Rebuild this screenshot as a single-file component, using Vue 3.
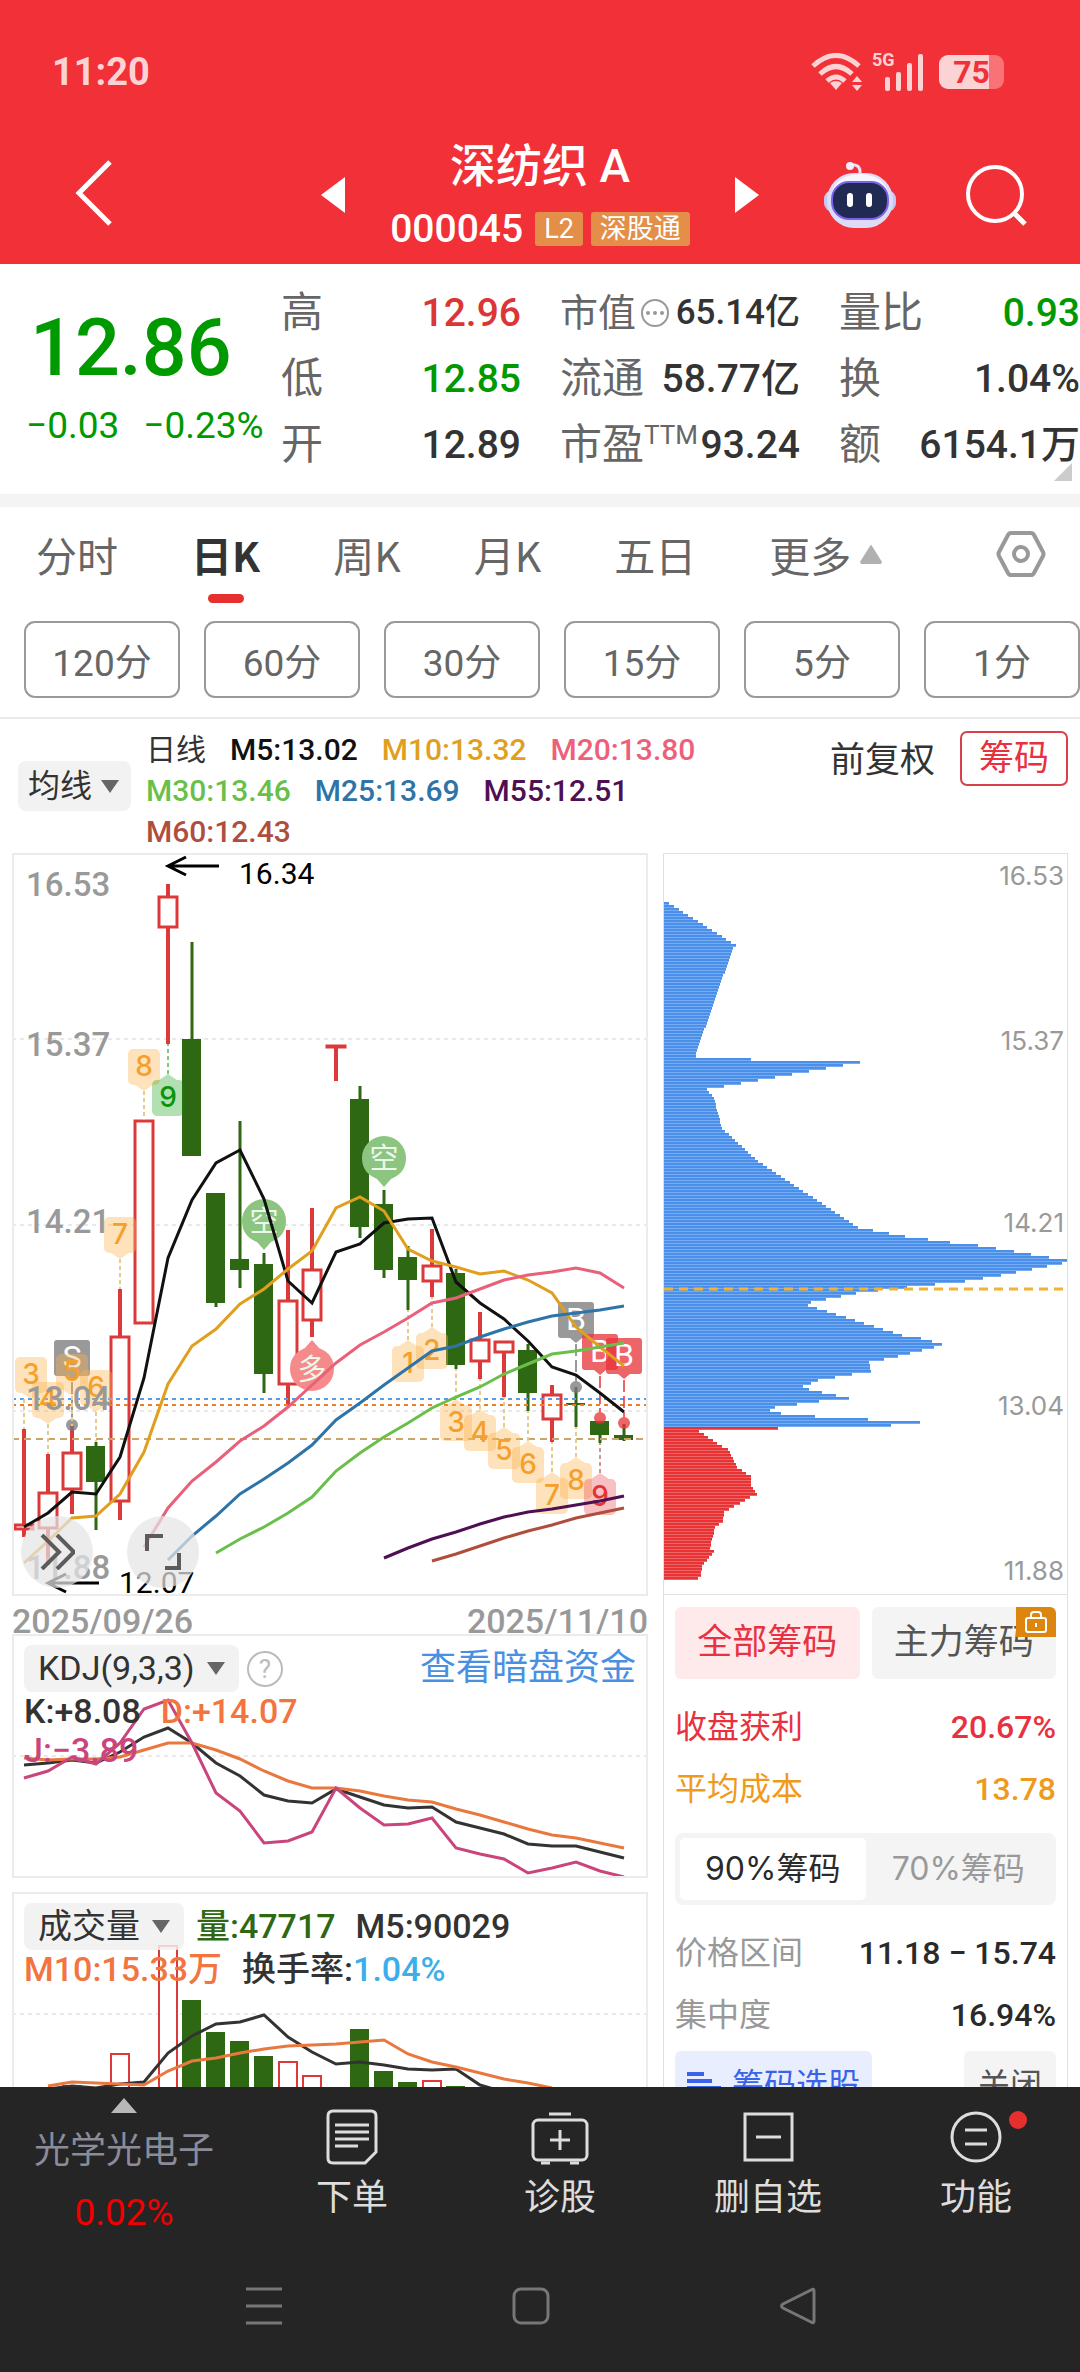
<script setup>
  import {ref} from "vue";

  const tabs = ["分时", "日K", "周K", "月K", "五日"];
  const activeTab = ref("日K");
  const periods = ["120分", "60分", "30分", "15分", "5分", "1分"];
  const average = ref("均线");
  const indicator = ref("KDJ(9,3,3)");
  const volume = ref("成交量");
  const chipRange = ref("90%筹码");

  const legend = [
    {text: "日线", color: "#333333"},
    {text: "M5:13.02", color: "#111111"},
    {text: "M10:13.32", color: "#e09f1f"},
    {text: "M20:13.80", color: "#ee6079"},
    {text: "M30:13.46", color: "#6abf4b"},
    {text: "M25:13.69", color: "#2f74a8"},
    {text: "M55:12.51", color: "#4f1053"},
    {text: "M60:12.43", color: "#b04e3e"}
  ];

  // [high, body top, body bottom, low, up]
  const candles = [
    [1429, 1524, 1530, 1537, 1], [1454, 1492, 1529, 1565, 1], [1426, 1452, 1490, 1514, 1],
    [1442, 1446, 1482, 1530, 0], [1289, 1336, 1502, 1520, 1], [1120, 1120, 1324, 1324, 1],
    [884, 896, 928, 1044, 1], [942, 1039, 1156, 1156, 0], [1193, 1193, 1303, 1307, 0],
    [1121, 1259, 1270, 1288, 0], [1253, 1264, 1374, 1393, 0], [1230, 1300, 1385, 1405, 1],
    [1208, 1269, 1321, 1337, 1], [1045, 1045, 1048, 1081, 1], [1086, 1099, 1227, 1238, 0],
    [1190, 1204, 1270, 1278, 0], [1246, 1257, 1280, 1310, 0], [1229, 1265, 1282, 1297, 1],
    [1269, 1273, 1365, 1369, 0], [1312, 1339, 1362, 1379, 1], [1341, 1341, 1353, 1397, 1],
    [1344, 1350, 1393, 1411, 0], [1385, 1394, 1420, 1442, 1], [1387, 1403, 1405, 1427, 0],
    [1421, 1421, 1435, 1443, 0], [1424, 1435, 1440, 1441, 0]
  ];

  const averages = [
    {start: 0, color: "#111111", ys: [1527, 1513, 1492, 1494, 1457, 1378, 1258, 1200, 1163, 1150, 1199, 1281, 1303, 1252, 1244, 1223, 1219, 1218, 1282, 1303, 1319, 1341, 1367, 1375, 1393, 1412]},
    {start: 0, color: "#e09f1f", ys: [1563, 1541, 1518, 1516, 1494, 1452, 1384, 1346, 1329, 1304, 1289, 1269, 1251, 1208, 1197, 1211, 1249, 1261, 1267, 1274, 1271, 1280, 1293, 1327, 1347, 1366]},
    {start: 5, color: "#e8607a", ys: [1547, 1508, 1481, 1462, 1441, 1426, 1407, 1385, 1363, 1345, 1332, 1318, 1303, 1298, 1289, 1280, 1275, 1272, 1268, 1273, 1288]},
    {start: 6, color: "#2f74a8", ys: [1560, 1536, 1516, 1494, 1479, 1463, 1445, 1420, 1403, 1385, 1368, 1351, 1346, 1337, 1329, 1322, 1316, 1313, 1310, 1306]},
    {start: 8, color: "#6abf4b", ys: [1553, 1539, 1527, 1513, 1497, 1471, 1453, 1437, 1423, 1408, 1397, 1387, 1374, 1364, 1354, 1351, 1347, 1343]},
    {start: 15, color: "#4f1053", ys: [1558, 1548, 1539, 1532, 1524, 1517, 1512, 1509, 1505, 1501, 1496]},
    {start: 17, color: "#b04e3e", ys: [1561, 1554, 1546, 1538, 1531, 1525, 1518, 1513, 1508]}
  ];

  const kdj = [
    {start: 0, color: "#333333", ys: [1765, 1763, 1760, 1763, 1752, 1737, 1728, 1743, 1763, 1776, 1795, 1801, 1803, 1789, 1797, 1805, 1808, 1807, 1822, 1828, 1834, 1844, 1846, 1846, 1852, 1858]},
    {start: 0, color: "#e9783f", ys: [1758, 1760, 1759, 1759, 1757, 1750, 1743, 1743, 1750, 1759, 1771, 1781, 1788, 1788, 1791, 1796, 1800, 1802, 1809, 1815, 1822, 1829, 1835, 1838, 1843, 1848]},
    {start: 0, color: "#c9457c", ys: [1778, 1771, 1757, 1764, 1743, 1709, 1700, 1743, 1793, 1811, 1843, 1841, 1832, 1788, 1808, 1825, 1824, 1818, 1848, 1854, 1859, 1873, 1868, 1862, 1871, 1877]}
  ];

  // [candle index, top, up]
  const volumes = [
    [2, 2085, 1], [4, 2053, 1], [6, 1945, 1], [7, 2000, 0], [8, 2032, 0], [9, 2041, 0], [10, 2056, 0],
    [11, 2061, 1], [12, 2075, 1], [14, 2029, 0], [15, 2071, 0], [16, 2082, 0], [17, 2080, 1], [18, 2086, 0]
  ];

  const volumeLines = [
    {start: 1, color: "#333333", ys: [2089, 2086, 2088, 2084, 2082, 2053, 2036, 2024, 2022, 2015, 2037, 2052, 2064, 2062, 2065, 2069, 2070, 2069, 2085, 2092]},
    {start: 1, color: "#e9783f", ys: [2086, 2082, 2083, 2084, 2085, 2071, 2061, 2058, 2053, 2049, 2046, 2045, 2044, 2042, 2040, 2054, 2062, 2067, 2073, 2079, 2083, 2088]}
  ];

  // numbered flags: box centre x, box top, pointer side, candle x and candle end
  const flags = [
    {n: 3, x: 31, y: 1357, up: false, cx: 24, end: 1429},
    {n: 4, x: 48, y: 1382, up: false, cx: 48, end: 1454},
    {n: 5, x: 72, y: 1354, up: false, cx: 72, end: 1426},
    {n: 6, x: 96, y: 1370, up: false, cx: 96, end: 1442},
    {n: 7, x: 120, y: 1217, up: false, cx: 120, end: 1289},
    {n: 8, x: 144, y: 1049, up: false, cx: 144, end: 1120},
    {n: 9, x: 168, y: 1080, up: true, cx: 168, end: 1044, kind: "green"},
    {n: 1, x: 408, y: 1346, up: true, cx: 408, end: 1310},
    {n: 2, x: 432, y: 1333, up: true, cx: 432, end: 1297},
    {n: 3, x: 456, y: 1405, up: true, cx: 456, end: 1369},
    {n: 4, x: 480, y: 1415, up: true, cx: 480, end: 1379},
    {n: 5, x: 504, y: 1433, up: true, cx: 504, end: 1397},
    {n: 6, x: 528, y: 1447, up: true, cx: 528, end: 1411},
    {n: 7, x: 552, y: 1478, up: true, cx: 552, end: 1442},
    {n: 8, x: 576, y: 1463, up: true, cx: 576, end: 1427},
    {n: 9, x: 600, y: 1479, up: true, cx: 600, end: 1443, kind: "red"}
  ];

  const trades = [
    {text: "S", x: 72, y: 1340, dot: 1425, color: "#777777"},
    {text: "B", x: 576, y: 1302, dot: 1387, color: "#777777"},
    {text: "B", x: 600, y: 1334, dot: 1418, color: "#e83238"},
    {text: "B", x: 624, y: 1338, dot: 1423, color: "#e83238"}
  ];

  const priceLabels = [["16.53", 896], ["15.37", 1056], ["14.21", 1233], ["13.04", 1410], ["11.88", 1579]];
  const chipLabels = [["16.53", 885], ["15.37", 1050], ["14.21", 1232], ["13.04", 1415], ["11.88", 1580]];

  // [row, width], rows in between are interpolated
  const chipKeys = [
    [0, 5], [14, 72], [15, 69], [50, 32], [51, 32], [52, 87], [53, 196], [54, 179], [61, 60], [62, 43], [65, 50],
    [75, 58], [86, 94], [97, 144], [108, 194], [109, 209], [111, 241], [113, 286], [114, 314], [119, 403], [120, 398],
    [124, 337], [126, 301], [127, 271], [128, 243], [129, 214], [130, 192], [133, 147], [134, 144], [144, 238],
    [145, 257], [147, 278], [148, 270], [151, 234], [153, 205], [156, 207], [157, 188], [159, 154], [161, 139],
    [162, 145], [165, 185], [166, 155], [168, 111], [169, 106], [170, 117], [171, 151], [173, 256], [174, 227],
    [175, 114], [176, 35], [181, 58], [182, 64], [188, 73], [190, 82], [191, 87], [194, 87], [197, 93], [198, 86],
    [203, 60], [206, 59], [208, 51], [215, 46], [216, 50], [221, 38], [224, 37], [225, 34]
  ];

  const chipBars = [];
  for (let i = 0; i < chipKeys.length - 1; i++)
  {
    const [row, width] = chipKeys[i];
    const [nextRow, nextWidth] = chipKeys[i + 1];
    for (let r = row; r < nextRow; r++)
      chipBars.push({row: r, width: Math.round(width + (nextWidth - width) * (r - row) / (nextRow - row))});
  }
  chipBars.push({row: 225, width: 34});

  function candleX(i)
  {
    return 24 + i * 24;
  }

  function points(line)
  {
    return line.ys.map((y, i) => candleX(line.start + i) + "," + y).join(" ");
  }

  function pointer(flag)
  {
    const base = flag.up ? flag.y : flag.y + 36;
    const tip = flag.up ? base - 6 : base + 6;
    return (flag.x - 9) + "," + base + " " + flag.x + "," + tip + " " + (flag.x + 9) + "," + base;
  }
</script>

<template>
  <main class="page">
    <header class="top">
      <div class="status">
        <span class="clock">11:20</span>
        <div class="signals">
          <svg width="52" height="38" viewBox="0 0 52 38" fill="none" stroke="#fcd3d5" stroke-width="5">
            <path d="M2 13 Q25 -8 48 13" />
            <path d="M9 21 Q25 6 41 21" />
            <path d="M16 28 Q25 20 34 28" />
            <path d="M25 37 L19 30 Q25 26 31 30 Z" fill="#fcd3d5" stroke="none" />
            <path d="M41 29 L46 23 L51 29 Z M41 32 L46 38 L51 32 Z" fill="#fcd3d5" stroke="none" />
          </svg>
          <div class="cell">
            <span class="net">5G</span>
            <svg width="40" height="38" viewBox="0 0 40 38" fill="#fcd3d5">
              <rect x="0" y="24" width="5" height="14" rx="2" />
              <rect x="11" y="19" width="5" height="19" rx="2" />
              <rect x="22" y="10" width="5" height="28" rx="2" />
              <rect x="33" y="1" width="5" height="37" rx="2" />
            </svg>
          </div>
          <div class="battery">75</div>
        </div>
      </div>
      <nav class="bar">
        <div class="bar-left">
          <button aria-label="返回">
            <svg width="38" height="66" viewBox="0 0 38 66" fill="none" stroke="#fff" stroke-width="5">
              <path d="M35 2 L4 33 L35 64" />
            </svg>
          </button>
        </div>
        <div class="switcher">
          <button aria-label="上一只">
            <svg width="24" height="36" viewBox="0 0 24 36"><path d="M24 0 V36 L0 18 Z" fill="#fff" /></svg>
          </button>
          <div class="stock">
            <h1>深纺织 A</h1>
            <p><span class="code">000045</span><span class="tag">L2</span><span class="tag">深股通</span></p>
          </div>
          <button aria-label="下一只">
            <svg width="24" height="36" viewBox="0 0 24 36"><path d="M0 0 V36 L24 18 Z" fill="#fff" /></svg>
          </button>
        </div>
        <div class="bar-right">
          <button aria-label="助手">
            <svg width="74" height="68" viewBox="0 0 74 68">
              <path d="M26 4 Q38 2 37 13" fill="none" stroke="#e4e2f8" stroke-width="3" />
              <circle cx="27" cy="5" r="4" fill="#f0effc" />
              <rect x="1" y="29" width="72" height="22" rx="9" fill="#c5c8f4" />
              <rect x="4" y="12" width="66" height="55" rx="27" fill="#dcdcf7" />
              <path d="M8 34 Q12 14 37 13 Q62 14 66 34 Q54 20 37 20 Q20 20 8 34 Z" fill="#f7f6fd" />
              <rect x="9" y="21" width="56" height="37" rx="17" fill="#212a52" stroke="#7a62ea" stroke-width="2" />
              <rect x="24" y="32" width="6" height="14" rx="3" fill="#fff" />
              <rect x="43" y="32" width="6" height="14" rx="3" fill="#fff" />
            </svg>
          </button>
          <button aria-label="搜索">
            <svg width="62" height="62" viewBox="0 0 62 62" fill="none" stroke="#fff" stroke-width="4">
              <circle cx="30" cy="30" r="27" />
              <path d="M49 49 L60 60" stroke-width="5" />
            </svg>
          </button>
        </div>
      </nav>
    </header>

    <div class="content">
      <section class="quote">
        <div class="price">
          <strong>12.86</strong>
          <p><span>−0.03</span><span>−0.23%</span></p>
        </div>
        <dl>
          <div><dt>高</dt><dd class="red">12.96</dd></div>
          <div><dt>低</dt><dd class="green">12.85</dd></div>
          <div><dt>开</dt><dd>12.89</dd></div>
        </dl>
        <dl>
          <div class="small">
            <dt>市值
              <svg width="30" height="30" viewBox="0 0 30 30" fill="#999">
                <circle cx="15" cy="15" r="13" fill="none" stroke="#999" stroke-width="2" />
                <circle cx="8" cy="15" r="2" /><circle cx="15" cy="15" r="2" /><circle cx="22" cy="15" r="2" />
              </svg>
            </dt>
            <dd>65.14<i>亿</i></dd>
          </div>
          <div><dt>流通</dt><dd>58.77<i>亿</i></dd></div>
          <div><dt>市盈<sup>TTM</sup></dt><dd>93.24</dd></div>
        </dl>
        <dl>
          <div><dt>量比</dt><dd class="green">0.93</dd></div>
          <div><dt>换</dt><dd>1.04%</dd></div>
          <div><dt>额</dt><dd>6154.1<i>万</i></dd></div>
        </dl>
        <span class="corner"></span>
      </section>

      <nav class="tabs">
        <button v-for="tab in tabs" :key="tab" :class="{active: tab === activeTab}" @click="activeTab = tab">{{ tab }}</button>
        <button class="more">更多
          <svg width="24" height="20" viewBox="0 0 24 20"><path d="M11 2 Q12 0 13 2 L23 18 Q23 20 21 20 H3 Q1 20 1 18 Z" fill="#b0b0b0" /></svg>
        </button>
        <button class="settings" aria-label="设置">
          <svg width="50" height="48" viewBox="0 0 50 48" fill="none" stroke="#999" stroke-width="4">
            <path d="M15 3 H35 Q37 3 38 5 L47 22 Q48 24 47 26 L38 43 Q37 45 35 45 H15 Q13 45 12 43 L3 26 Q2 24 3 22 L12 5 Q13 3 15 3 Z" />
            <circle cx="25" cy="24" r="7" />
          </svg>
        </button>
      </nav>

      <div class="periods">
        <button v-for="period in periods" :key="period">{{ period }}</button>
      </div>

      <section class="averages">
        <label class="pick"><select v-model="average" aria-label="均线"><option>均线</option></select></label>
        <p class="legend"><span v-for="item in legend" :key="item.text" :style="{color: item.color}">{{ item.text }}</span></p>
        <button class="adjust">前复权</button>
        <button class="chips">筹码</button>
      </section>

      <div class="charts">
        <div class="left">
          <div class="panel">
            <svg class="plot" viewBox="14 855 632 739">
              <g stroke="#e9e9e9" stroke-width="2" stroke-dasharray="4 4">
                <path d="M12 1039 H648" /><path d="M12 1225 H648" /><path d="M12 1411 H648" />
              </g>
              <g v-for="(c, i) in candles" :key="i" :stroke="c[4] ? '#dc3a3a' : '#2f6813'">
                <path :d="`M${candleX(i)} ${c[0]} V${c[1]} M${candleX(i)} ${c[2]} V${c[3]}`" :stroke-width="c[4] ? 4 : 3" />
                <rect v-if="c[4]" :x="candleX(i) - 9" :y="c[1] + 1" width="18" :height="c[2] - c[1] - 2" fill="#fff" stroke-width="3" />
                <rect v-else :x="candleX(i) - 10" :y="c[1]" width="19" :height="c[2] - c[1]" fill="#2f6813" stroke="none" />
              </g>
              <path d="M12 1439 H648" stroke="#c9a56e" stroke-width="2" stroke-dasharray="7 5" />
              <path d="M12 1399 H648" stroke="#5b9be3" stroke-width="2" stroke-dasharray="4 4" />
              <path d="M12 1405 H648" stroke="#ee7d1d" stroke-width="2" stroke-dasharray="4 4" />
              <g v-for="t in trades" :key="t.x">
                <g opacity="0.75">
                  <path :d="`M${t.x} ${t.y + 42} V${t.dot}`" :stroke="t.color" stroke-width="2" stroke-dasharray="12 4" />
                  <circle :cx="t.x" :cy="t.dot" r="6" :fill="t.color" />
                  <path :d="`M${t.x - 18} ${t.y + 3} q0 -3 3 -3 h30 q3 0 3 3 v30 q0 3 -3 3 h-9 l-6 5 l-6 -5 h-9 q-3 0 -3 -3 Z`" :fill="t.color" />
                </g>
                <text class="trade" :x="t.x" :y="t.y + 28">{{ t.text }}</text>
              </g>
              <g v-for="f in flags" :key="f.x" class="flag" :class="f.kind">
                <path :d="`M${f.cx} ${f.up ? f.y - 6 : f.y + 42} V${f.end}`" stroke-width="2" stroke-dasharray="4 3" />
                <rect :x="f.x - 16" :y="f.y" width="32" height="36" rx="5" />
                <polygon :points="pointer(f)" />
                <text :x="f.x" :y="f.y + 27">{{ f.n }}</text>
              </g>
              <g class="pin">
                <path d="M242 1221 a22 22 0 1 1 44 0 q0 15 -15 21 l-7 8 l-7 -8 q-15 -6 -15 -21 Z" fill="#8bc57f" />
                <text x="264" y="1232">空</text>
                <path d="M362 1158 a22 22 0 1 1 44 0 q0 15 -15 21 l-7 8 l-7 -8 q-15 -6 -15 -21 Z" fill="#8bc57f" />
                <text x="384" y="1169">空</text>
                <path d="M290 1369 a22 22 0 1 0 44 0 q0 -15 -15 -21 l-7 -8 l-7 8 q-15 6 -15 21 Z" fill="#f58a8a" />
                <text x="312" y="1380">多</text>
              </g>
              <polyline v-for="line in averages" :key="line.color" :points="points(line)" fill="none" :stroke="line.color" stroke-width="3" />
              <text v-for="label in priceLabels" :key="label[0]" class="axis" x="26" :y="label[1]">{{ label[0] }}</text>
              <g fill="none" stroke="#000" stroke-width="3">
                <path d="M219 866 H168 M186 857 L168 866 L186 875" />
                <path d="M99 1583 H48 M66 1574 L48 1583 L66 1592" />
              </g>
              <text class="peak" x="239" y="884">16.34</text>
              <text class="peak" x="119" y="1593">12.07</text>
            </svg>
            <div class="tools">
              <button aria-label="展开">
                <svg width="36" height="36" viewBox="0 0 36 36"><path d="M3 1 L20 18 L3 35 M18 1 L35 18 L18 35" /></svg>
              </button>
              <button aria-label="全屏">
                <svg width="36" height="36" viewBox="0 0 36 36"><path d="M2 17 V2 H18 M20 34 H34 V19" /></svg>
              </button>
            </div>
          </div>
          <div class="dates"><span>2025/09/26</span><span>2025/11/10</span></div>

          <div class="panel">
            <svg class="plot" viewBox="14 1636 632 240">
              <path d="M12 1756 H648" stroke="#e9e9e9" stroke-width="2" stroke-dasharray="4 4" />
              <polyline v-for="line in kdj" :key="line.color" :points="points(line)" fill="none" :stroke="line.color" stroke-width="3" />
            </svg>
            <div class="overlay">
              <div class="row">
                <label class="pick"><select v-model="indicator" aria-label="指标"><option>KDJ(9,3,3)</option></select></label>
                <button class="help" aria-label="说明">?</button>
                <a class="dark" href="#">查看暗盘资金</a>
              </div>
              <p><span>K:+8.08</span><span class="orange">D:+14.07</span></p>
              <p><span class="purple">J:−3.89</span></p>
            </div>
          </div>

          <div class="panel">
            <svg class="plot" viewBox="14 1894 632 240">
              <path d="M12 2014 H648" stroke="#e9e9e9" stroke-width="2" stroke-dasharray="4 4" />
              <g v-for="v in volumes" :key="v[0]">
                <rect v-if="v[2]" :x="candleX(v[0]) - 9" :y="v[1] + 1" width="18" :height="2140 - v[1]" fill="#fff" stroke="#dc3a3a" stroke-width="2" />
                <rect v-else :x="candleX(v[0]) - 10" :y="v[1]" width="19" :height="2140 - v[1]" fill="#2f6813" />
              </g>
              <polyline v-for="line in volumeLines" :key="line.color" :points="points(line)" fill="none" :stroke="line.color" stroke-width="3" />
            </svg>
            <div class="overlay">
              <div class="row">
                <label class="pick"><select v-model="volume" aria-label="副图"><option>成交量</option></select></label>
                <p><span class="leaf">量:47717</span><span>M5:90029</span></p>
              </div>
              <p><span class="orange">M10:15.33万</span><span>换手率:<b>1.04%</b></span></p>
            </div>
          </div>
        </div>

        <aside class="right">
          <svg class="plot" viewBox="664 854 403 740">
            <g v-for="bar in chipBars" :key="bar.row" :fill="bar.row < 175 ? '#4a90eb' : '#e83234'">
              <rect x="664" :y="902 + bar.row * 3" :width="bar.width" height="3" />
              <rect x="664" :y="904 + bar.row * 3" :width="bar.width" height="1" fill="#fff" opacity="0.25" />
            </g>
            <path d="M664 1289 H1064" stroke="#f2b233" stroke-width="3" stroke-dasharray="9 6" />
            <text v-for="label in chipLabels" :key="label[0]" class="chip-axis" x="1064" :y="label[1]">{{ label[0] }}</text>
          </svg>
          <div class="chip-info">
            <div class="kinds">
              <button class="on">全部筹码</button>
              <button>主力筹码
                <span class="lock">
                  <svg width="24" height="24" viewBox="0 0 24 24" fill="none" stroke="#fff" stroke-width="2">
                    <rect x="2" y="8" width="20" height="14" rx="2" />
                    <path d="M7 8 V5 Q7 2 10 2 H14 Q17 2 17 5 V8 M12 13 V17" />
                  </svg>
                </span>
              </button>
            </div>
            <p class="crimson"><span>收盘获利</span><b>20.67%</b></p>
            <p class="amber"><span>平均成本</span><b>13.78</b></p>
            <div class="segment">
              <button v-for="name in ['90%筹码', '70%筹码']" :key="name" :class="{on: name === chipRange}" @click="chipRange = name">{{ name }}</button>
            </div>
            <p><span>价格区间</span><b>11.18 − 15.74</b></p>
            <p><span>集中度</span><b>16.94%</b></p>
            <div class="actions">
              <button class="pick-stock">
                <svg width="34" height="26" viewBox="0 0 34 26" fill="#3a63ea">
                  <rect y="0" width="17" height="4" /><rect y="7" width="25" height="4" /><rect y="14" width="34" height="4" /><rect y="21" width="34" height="4" />
                </svg>
                筹码选股
              </button>
              <button>关闭</button>
            </div>
          </div>
        </aside>
      </div>
    </div>

    <footer class="bottom">
      <nav class="menu">
        <button class="sector">
          <svg width="26" height="15" viewBox="0 0 26 15"><path d="M13 0 L26 15 H0 Z" fill="#b8b8b8" /></svg>
          <span>光学光电子</span>
          <em>0.02%</em>
        </button>
        <button>
          <svg width="60" height="56" viewBox="0 0 60 56" fill="none" stroke="#ddd" stroke-width="3">
            <path d="M11 2 H49 Q54 2 54 7 V43 L43 54 H11 Q6 54 6 49 V7 Q6 2 11 2 Z" />
            <path d="M13 16 H47 M13 23 H47 M13 30 H47 M13 37 H36" />
          </svg>
          <span>下单</span>
        </button>
        <button>
          <svg width="60" height="56" viewBox="0 0 60 56" fill="none" stroke="#ddd" stroke-width="3">
            <rect x="3" y="11" width="54" height="40" rx="5" />
            <path d="M19 5 H41 M30 21 V41 M20 31 H40 M11 54 H20 M40 54 H49" />
          </svg>
          <span>诊股</span>
        </button>
        <button>
          <svg width="60" height="56" viewBox="0 0 60 56" fill="none" stroke="#ddd" stroke-width="3">
            <rect x="7" y="5" width="47" height="46" />
            <path d="M18 28 H43" />
          </svg>
          <span>删自选</span>
        </button>
        <button>
          <svg width="60" height="56" viewBox="0 0 60 56" fill="none" stroke="#ddd" stroke-width="3">
            <circle cx="30" cy="28" r="24" />
            <path d="M19 21 H41 M19 35 H41" />
          </svg>
          <span>功能</span>
          <i class="dot"></i>
        </button>
      </nav>
      <nav class="system">
        <button aria-label="菜单">
          <svg width="38" height="38" viewBox="0 0 38 38"><path d="M1 2 H37 M1 19 H37 M1 36 H37" /></svg>
        </button>
        <button aria-label="主页">
          <svg width="38" height="38" viewBox="0 0 38 38"><rect x="2" y="2" width="34" height="34" rx="7" /></svg>
        </button>
        <button aria-label="后退">
          <svg width="38" height="38" viewBox="0 0 38 38"><path d="M35 4 V34 Q35 37 32 35 L4 21 Q1 19 4 17 L32 3 Q35 1 35 4 Z" /></svg>
        </button>
      </nav>
    </footer>
  </main>
</template>

<style>
  body
  {
    margin: 0;
  }
</style>

<style scoped>
  .page
  {
    height: 100vh;
    display: flex;
    flex-direction: column;
    overflow: hidden;
    background-color: white;
    color: #333;
    font-family: Roboto, "Noto Sans CJK SC", sans-serif;
  }

  button
  {
    padding: 0;
    border: 0;
    background: none;
    font: inherit;
    color: inherit;
    cursor: pointer;
  }

  svg
  {
    display: block;
    flex-shrink: 0;
  }

  h1, p, dl, dd
  {
    margin: 0;
  }

  /* header */
  .top
  {
    flex-shrink: 0;
    height: 264px;
    background-color: #f23037;
    color: white;
  }

  .status
  {
    height: 116px;
    padding: 14px 76px 0 52px;
    display: flex;
    justify-content: space-between;
    align-items: center;
    color: #fcd3d5;
    font-weight: bold;
  }

  .clock
  {
    font-size: 38px;
  }

  .signals
  {
    display: flex;
    align-items: center;
    gap: 14px;
  }

  .cell
  {
    position: relative;
    padding-left: 8px;
  }

  .net
  {
    position: absolute;
    left: -5px;
    top: -3px;
    font-size: 18px;
    line-height: 20px;
  }

  .battery
  {
    width: 65px;
    height: 34px;
    border-radius: 9px;
    background: linear-gradient(to right, #fcd3d5 50px, #f87276 50px);
    color: #f23037;
    font-size: 32px;
    line-height: 35px;
    text-align: center;
  }

  .bar
  {
    height: 124px;
    display: grid;
    grid-template-columns: 1fr auto 1fr;
    align-items: center;
  }

  .bar-left
  {
    padding-left: 75px;
  }

  .bar-right
  {
    display: flex;
    justify-content: flex-end;
    align-items: center;
    gap: 68px;
    padding-right: 53px;
  }

  .switcher
  {
    display: flex;
    align-items: center;
  }

  .stock
  {
    width: 390px;
    padding-top: 4px;
    text-align: center;
  }

  .stock h1
  {
    font-size: 46px;
    line-height: 64px;
    font-weight: 500;
  }

  .stock p
  {
    display: flex;
    justify-content: center;
    align-items: center;
    gap: 8px;
    height: 62px;
  }

  .code
  {
    margin-right: 4px;
    font-size: 39px;
    font-weight: 500;
  }

  .tag
  {
    padding: 0 9px;
    border-radius: 3px;
    background-color: #e38e49;
    font-size: 27px;
    line-height: 34px;
  }

  .content
  {
    flex: 1;
    min-height: 0;
    overflow: hidden;
  }

  /* quote */
  .quote
  {
    position: relative;
    display: grid;
    grid-template-columns: minmax(0, 281fr) minmax(0, 279fr) minmax(0, 279fr) minmax(0, 241fr);
    padding: 16px 0;
    border-bottom: 13px solid #f4f4f4;
  }

  .price
  {
    padding-left: 26px;
    color: #090;
  }

  .price strong
  {
    display: block;
    padding-top: 20px;
    font-size: 79px;
    font-weight: 500;
    line-height: 96px;
    text-indent: 4px;
  }

  .price p
  {
    display: flex;
    gap: 24px;
    font-size: 37px;
    line-height: 60px;
    white-space: nowrap;
  }

  dl
  {
    padding-right: 39px;
  }

  dl:last-of-type
  {
    padding-right: 0;
  }

  dl div
  {
    display: flex;
    justify-content: space-between;
    align-items: center;
    height: 66px;
    font-size: 39px;
    font-weight: 500;
    line-height: 60px;
    white-space: nowrap;
  }

  dl .small
  {
    font-size: 35px;
  }

  dt
  {
    display: flex;
    align-items: center;
    color: #666;
    font-size: 42px;
    font-weight: normal;
  }

  .small dt
  {
    font-size: 38px;
    gap: 4px;
  }

  dt sup
  {
    align-self: flex-start;
    font-size: 26px;
    line-height: 40px;
  }

  dd i
  {
    font-style: normal;
  }

  .red
  {
    color: #dc3535;
  }

  .green
  {
    color: #090;
  }

  .corner
  {
    position: absolute;
    right: 8px;
    bottom: 13px;
    border: 9px solid transparent;
    border-right-color: #ccc;
    border-bottom-color: #ccc;
  }

  /* tabs */
  .tabs
  {
    display: flex;
    gap: 73px;
    height: 100px;
    padding: 0 34px 0 36px;
    color: #666;
    font-size: 41px;
    line-height: 94px;
    font-family: "Noto Sans CJK SC", sans-serif;
  }

  .tabs button
  {
    height: 94px;
  }

  .tabs .active
  {
    position: relative;
    color: #333;
    font-weight: bold;
  }

  .tabs .active::after
  {
    content: "";
    position: absolute;
    left: 50%;
    bottom: -2px;
    width: 36px;
    height: 9px;
    margin-left: -18px;
    border-radius: 5px;
    background-color: #e63030;
  }

  .tabs .more, .tabs .settings
  {
    display: flex;
    align-items: center;
    gap: 8px;
  }

  .settings
  {
    margin-left: auto;
  }

  .periods
  {
    display: flex;
    gap: 24px;
    padding: 14px 0 19px 24px;
    border-bottom: 2px solid #e9e9e9;
  }

  .periods button
  {
    flex: 1;
    height: 77px;
    border: 2px solid #999;
    border-radius: 11px;
    color: #666;
    font-size: 37px;
  }

  /* moving averages */
  .averages
  {
    display: flex;
    align-items: center;
    height: 134px;
    padding: 0 12px 0 18px;
  }

  .pick
  {
    display: flex;
    align-items: center;
    gap: 8px;
    padding: 0 12px;
    border-radius: 8px;
    background-color: rgba(240, 240, 240, 0.85);
  }

  .pick::after
  {
    content: "";
    border: 9px solid transparent;
    border-top: 13px solid #666;
    border-bottom: 0;
  }

  .pick select
  {
    appearance: none;
    border: 0;
    padding: 0;
    background: none;
    color: #333;
    font: inherit;
    font-size: 34px;
    line-height: 47px;
  }

  .averages .pick select
  {
    font-size: 32px;
    line-height: 50px;
  }

  .averages .pick
  {
    padding: 0 12px 0 10px;
  }

  .legend
  {
    flex: 1;
    display: flex;
    flex-wrap: wrap;
    column-gap: 24px;
    padding: 8px 90px 0 15px;
    font-size: 30px;
    font-weight: 500;
    line-height: 41px;
  }

  .legend span:first-child
  {
    font-weight: normal;
  }

  .adjust, .chips
  {
    align-self: flex-start;
    margin-top: 12px;
    font-size: 35px;
    line-height: 51px;
  }

  .adjust
  {
    padding-top: 4px;
    margin-right: 25px;
  }

  .chips
  {
    padding: 0 17px;
    border: 2px solid #d8404a;
    border-radius: 7px;
    color: #e8313f;
  }

  /* charts */
  .charts
  {
    display: grid;
    grid-template-columns: 636fr 405fr;
    gap: 15px;
    padding: 0 12px;
  }

  .panel
  {
    position: relative;
    border: 2px solid #ebebeb;
  }

  .plot
  {
    width: 100%;
    height: auto;
  }

  .panel + .panel
  {
    margin-top: 14px;
  }

  .axis
  {
    fill: #999;
    font-size: 33px;
    font-weight: 500;
  }

  .peak
  {
    font-size: 30px;
  }

  .trade
  {
    fill: white;
    font-size: 32px;
    text-anchor: middle;
  }

  .flag text
  {
    fill: #f5a02a;
    font-family: Inter, Roboto, sans-serif;
    font-size: 28px;
    font-weight: 500;
    text-anchor: middle;
  }

  .flag path
  {
    stroke: #e3cc8d;
  }

  .flag rect, .flag polygon
  {
    fill: rgba(252, 178, 75, 0.38);
  }

  .flag.green text
  {
    fill: #0a950a;
  }

  .flag.green path
  {
    stroke: #7fc97f;
  }

  .flag.green rect, .flag.green polygon
  {
    fill: rgba(0, 153, 0, 0.3);
  }

  .flag.red text
  {
    fill: #e03434;
  }

  .flag.red path
  {
    stroke: #cf9797;
  }

  .flag.red rect, .flag.red polygon
  {
    fill: rgba(230, 50, 60, 0.3);
  }

  .pin text
  {
    fill: #eef7ec;
    font-size: 29px;
    text-anchor: middle;
  }

  .tools
  {
    position: absolute;
    left: 7px;
    bottom: 6px;
    display: flex;
    gap: 34px;
  }

  .tools button
  {
    width: 72px;
    height: 72px;
    display: flex;
    justify-content: center;
    align-items: center;
    border-radius: 50%;
    background-color: rgba(228, 228, 228, 0.72);
  }

  .tools path
  {
    fill: none;
    stroke: #5c5c5c;
    stroke-width: 4;
  }

  .dates
  {
    display: flex;
    justify-content: space-between;
    height: 38px;
    color: #999;
    font-size: 34px;
    font-weight: 500;
    line-height: 50px;
  }

  .overlay
  {
    position: absolute;
    left: 10px;
    right: 10px;
    top: 9px;
    font-size: 34px;
    font-weight: 500;
  }

  .overlay p
  {
    display: flex;
    gap: 20px;
    line-height: 39px;
  }

  .row
  {
    display: flex;
    align-items: center;
    gap: 8px;
  }

  .row p
  {
    padding-left: 4px;
  }

  .row .pick
  {
    padding: 0 14px;
    gap: 12px;
    font-weight: normal;
  }

  .help
  {
    width: 36px;
    height: 36px;
    border: 2px solid #bbb;
    border-radius: 50%;
    color: #bbb;
    font-size: 26px;
    font-weight: normal;
    line-height: 32px;
  }

  .dark
  {
    margin-left: auto;
    color: #4a90e2;
    font-size: 36px;
    font-weight: normal;
    line-height: 47px;
    text-decoration: none;
  }

  .orange
  {
    color: #f2753f;
  }

  .purple
  {
    color: #c9457c;
  }

  .leaf
  {
    color: #2f6813;
  }

  .overlay b
  {
    color: #3daee9;
    font-weight: 500;
  }

  /* chip distribution */
  .right
  {
    border: 1px solid #e0e0e0;
  }

  .chip-axis
  {
    fill: #999;
    font-family: Inter, sans-serif;
    font-size: 26px;
    text-anchor: end;
  }

  .chip-info
  {
    padding: 12px 11px;
    border-top: 1px solid #e0e0e0;
  }

  .kinds
  {
    display: flex;
    gap: 12px;
    padding-bottom: 17px;
  }

  .kinds button
  {
    position: relative;
    flex: 1;
    border-radius: 6px;
    background-color: #f4f4f4;
    color: #555;
    font-size: 35px;
    line-height: 72px;
  }

  .kinds .on
  {
    background-color: #fee9eb;
    color: #e83242;
  }

  .lock
  {
    position: absolute;
    right: 0;
    top: 0;
    padding: 3px 8px;
    border-radius: 0 6px 0 0;
    background-color: #dc850f;
  }

  .chip-info p
  {
    display: flex;
    justify-content: space-between;
    color: #999;
    font-size: 32px;
    line-height: 62px;
  }

  .chip-info b
  {
    color: #2a2a2a;
    font-weight: 500;
  }

  .chip-info .crimson, .crimson b
  {
    color: #e8313f;
  }

  .chip-info .amber, .amber b
  {
    color: #f09a1c;
  }

  .segment
  {
    display: flex;
    margin: 13px 0 17px;
    padding: 5px;
    border-radius: 8px;
    background-color: #f4f4f4;
  }

  .segment button
  {
    flex: 1;
    border-radius: 5px;
    color: #999;
    font-size: 32px;
    line-height: 62px;
    font-family: Inter, "Noto Sans CJK SC", sans-serif;
  }

  .segment .on
  {
    background-color: white;
    color: #2a2a2a;
  }

  .actions
  {
    display: flex;
    justify-content: space-between;
    padding-top: 5px;
  }

  .actions button
  {
    display: flex;
    align-items: center;
    gap: 11px;
    padding: 0 14px;
    border-radius: 6px;
    background-color: #f4f4f4;
    color: #555;
    font-size: 32px;
    line-height: 68px;
  }

  .actions .pick-stock
  {
    padding: 0 12px;
    background-color: #e9eefe;
    color: #3a63ea;
  }

  /* bottom bars */
  .bottom
  {
    flex-shrink: 0;
    height: 285px;
    background-color: #252525;
    color: #ddd;
  }

  .menu
  {
    display: grid;
    grid-template-columns: 248fr 208fr 208fr 208fr 208fr;
    height: 150px;
  }

  .menu button
  {
    position: relative;
    display: flex;
    flex-direction: column;
    align-items: center;
    padding-top: 22px;
    font-size: 36px;
    line-height: 66px;
  }

  .menu .sector
  {
    padding-top: 11px;
    color: #8b8b9a;
  }

  .sector span
  {
    line-height: 76px;
  }

  .sector em
  {
    color: #f00000;
    font-style: normal;
    font-size: 37px;
    line-height: 48px;
  }

  .dot
  {
    position: absolute;
    top: 24px;
    left: 50%;
    width: 18px;
    height: 18px;
    margin-left: 33px;
    border-radius: 50%;
    background-color: #e63030;
  }

  .system
  {
    display: grid;
    grid-template-columns: 1fr 1fr 1fr;
    align-items: center;
    padding: 50px 148px 0 130px;
  }

  .system svg
  {
    margin: 0 auto;
    fill: none;
    stroke: #777;
    stroke-width: 3;
  }
</style>
